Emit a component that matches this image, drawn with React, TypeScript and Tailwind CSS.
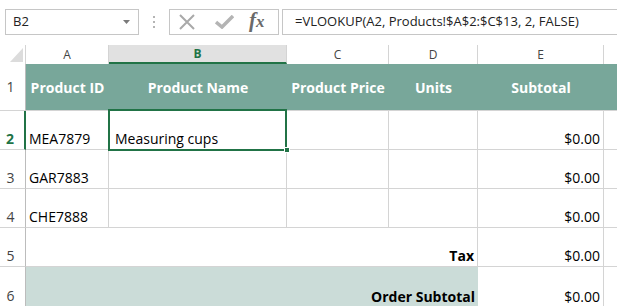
import React from "react";

const cellFont = { fontFamily: '"Open Sans", "Noto Sans", sans-serif' };

const grid = "border-[#d4d4d4]";

const RowHead = ({ n, active = false }: { n: number; active?: boolean }) => (
  <div
    className={`flex items-end justify-center pb-[3px] pr-[4px] text-[14px] leading-none border-r ${
      active ? "border-r-2 border-r-[#217346] font-bold text-[#217346]" : "border-r-[#bcbcbc] text-[#444]"
    } border-b ${grid}`}
  >
    {n}
  </div>
);

const Cell = ({
  children,
  className = "",
}: {
  children?: React.ReactNode;
  className?: string;
}) => (
  <div
    className={`flex items-end pb-[3px] px-[3px] text-[14px] leading-none text-black ${className}`}
  >
    {children}
  </div>
);

const ColHead = ({ label, active = false, last = false }: { label: string; active?: boolean; last?: boolean }) => (
  <div
    className={`flex items-center justify-center text-[12px] ${
      active
        ? "bg-[#e1e1e1] border-b-2 border-[#217346] text-[#217346] font-bold"
        : "text-[#444] bg-white"
    } ${last ? "" : "border-r border-r-[#d4d4d4]"}`}
  >
    {label}
  </div>
);

export default function App() {
  return (
    <div className="w-[617px] h-[306px] overflow-hidden bg-white" style={cellFont}>
      {/* formula bar */}
      <div className="h-[45px] flex items-start pt-[9px]">
        <div className="ml-[5px] w-[134px] h-[26px] border border-[#c6c6c6] flex items-center justify-between pl-[7px] pr-[8px]">
          <span className="text-[13px] text-[#222]">B2</span>
          <svg width="7" height="4" viewBox="0 0 7 4">
            <path d="M0 0 L7 0 L3.5 4 Z" fill="#7a7a7a" />
          </svg>
        </div>
        <div className="w-[30px] h-[26px] flex flex-col items-center justify-center gap-[3px]">
          <span className="w-[2px] h-[2px] bg-[#b4b4b4]" />
          <span className="w-[2px] h-[2px] bg-[#b4b4b4]" />
          <span className="w-[2px] h-[2px] bg-[#b4b4b4]" />
        </div>
        <div className="w-[110px] h-[26px] border border-[#c6c6c6] flex items-center">
          <svg className="ml-[8px]" width="18" height="18" viewBox="0 0 18 18">
            <path d="M2 2 L16 16 M16 2 L2 16" stroke="#a9a9a9" strokeWidth="2" />
          </svg>
          <svg className="ml-[19px]" width="19" height="14" viewBox="0 0 19 14">
            <path d="M1 7 L7 12 L18 1" stroke="#b4b4b4" strokeWidth="3.5" fill="none" />
          </svg>
          <span
            className="ml-[15px] text-[21px] italic font-bold leading-none text-[#6a6a6a] -mt-[3px]"
            style={{ fontFamily: '"Liberation Serif", serif' }}
          >
            f<span className="text-[17px]">x</span>
          </span>
        </div>
        <div className="ml-[3px] flex-1 h-[26px] border border-r-0 border-[#c6c6c6] flex items-center pl-[12px]">
          <span className="text-[13px] text-[#222] whitespace-nowrap">
            =VLOOKUP(A2, Products!$A$2:$C$13, 2, FALSE)
          </span>
        </div>
      </div>

      {/* sheet */}
      <div className="grid grid-cols-[26px_83px_178px_102px_89px_126px_1fr] grid-rows-[19px_47px_39px_39px_39px_39px_40px]">
        {/* column headers */}
        <div className="relative border-r border-[#d4d4d4]">
          <svg className="absolute left-[10px] top-[3px]" width="13" height="14" viewBox="0 0 13 14">
            <path d="M13 0 L13 14 L0 14 Z" fill="#dcdcdc" />
          </svg>
        </div>
        <ColHead label="A" />
        <ColHead label="B" active />
        <ColHead label="C" />
        <ColHead label="D" />
        <ColHead label="E" />
        <ColHead label="" last />

        {/* row 1 */}
        <div className="flex items-end justify-center pb-[16px] pr-[4px] text-[14px] leading-none text-[#444] border-r border-r-[#bcbcbc] border-b border-b-[#d4d4d4]">
          1
        </div>
        {["Product ID", "Product Name", "Product Price", "Units", "Subtotal"].map((h) => (
          <div
            key={h}
            className="bg-[#78a79a] border-b border-[#d4d4d4] flex items-center justify-center text-white font-bold text-[14px] whitespace-nowrap"
          >
            {h}
          </div>
        ))}
        <div className="bg-[#78a79a] border-b border-[#d4d4d4]" />

        {/* row 2 */}
        <RowHead n={2} active />
        <Cell className={`border-r border-b ${grid}`}>MEA7879</Cell>
        <Cell className={`relative border-r border-b ${grid} pl-[6px]`}>
          Measuring cups
          <div className="absolute -left-px -top-[2px] -right-px -bottom-[2px] border-2 border-[#217346]" />
          <div className="absolute -right-[4px] -bottom-[4px] w-[6px] h-[6px] bg-[#217346] border border-white" />
        </Cell>
        <Cell className={`border-r border-b ${grid}`} />
        <Cell className={`border-r border-b ${grid}`} />
        <Cell className={`border-r border-b ${grid} justify-end`}>$0.00</Cell>
        <Cell className={`border-b ${grid}`} />

        {/* row 3 */}
        <RowHead n={3} />
        <Cell className={`border-r border-b ${grid}`}>GAR7883</Cell>
        <Cell className={`border-r border-b ${grid}`} />
        <Cell className={`border-r border-b ${grid}`} />
        <Cell className={`border-r border-b ${grid}`} />
        <Cell className={`border-r border-b ${grid} justify-end`}>$0.00</Cell>
        <Cell className={`border-b ${grid}`} />

        {/* row 4 */}
        <RowHead n={4} />
        <Cell className={`border-r border-b ${grid}`}>CHE7888</Cell>
        <Cell className={`border-r border-b ${grid}`} />
        <Cell className={`border-r border-b ${grid}`} />
        <Cell className={`border-r border-b ${grid}`} />
        <Cell className={`border-r border-b ${grid} justify-end`}>$0.00</Cell>
        <Cell className={`border-b ${grid}`} />

        {/* row 5 */}
        <RowHead n={5} />
        <Cell className={`col-span-4 border-r border-b ${grid} justify-end font-bold`}>Tax</Cell>
        <Cell className={`border-r border-b ${grid} justify-end`}>$0.00</Cell>
        <Cell className={`border-b ${grid}`} />

        {/* row 6 */}
        <RowHead n={6} />
        <Cell className="col-span-4 bg-[#cbdcd8] justify-end font-bold">Order Subtotal</Cell>
        <Cell className={`border-r ${grid} justify-end`}>$0.00</Cell>
        <Cell />
      </div>
    </div>
  );
}
